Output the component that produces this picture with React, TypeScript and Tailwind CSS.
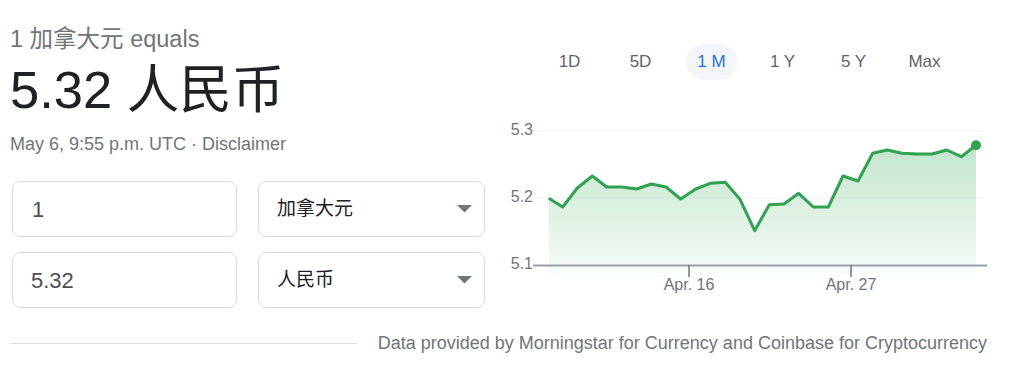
import React from "react";

const tabs = ["1D", "5D", "1 M", "1 Y", "5 Y", "Max"];

// chart points, page coordinates
const pts: [number, number][] = [
  [548.7, 198.3], [562.7, 207], [577.3, 188], [592.3, 176], [606.7, 187],
  [621.7, 187], [636.7, 189], [651.3, 184], [666, 187], [680.7, 199],
  [695.7, 189], [710.3, 183.3], [725.3, 182.3], [740, 199.3], [754.7, 230.7],
  [769.3, 204.7], [784, 204], [798.7, 193.3], [813.3, 207], [828.3, 207],
  [843, 176], [858, 181], [872.7, 153.3], [887.3, 150], [902, 153.3],
  [917, 154], [932, 154], [946.7, 150], [961.3, 156.7], [976, 145.3],
];

const OX = 500;
const OY = 100;

const Chart: React.FC = () => {
  const p = pts.map(([x, y]) => [x - OX, y - OY]);
  const line = p.map(([x, y], i) => `${i ? "L" : "M"}${x.toFixed(1)},${y.toFixed(1)}`).join(" ");
  const first = p[0];
  const last = p[p.length - 1];
  const area = `${line} L${last[0]},173 L${first[0]},173 Z`;
  return (
    <svg width="517" height="210" className="block">
      <defs>
        <linearGradient id="fillG" x1="0" y1="0" x2="0" y2="1">
          <stop offset="0" stopColor="#34a853" stopOpacity="0.3" />
          <stop offset="1" stopColor="#34a853" stopOpacity="0.04" />
        </linearGradient>
      </defs>
      <line x1="33" y1="31" x2="483" y2="31" stroke="#f1f3f4" strokeWidth="1" />
      <line x1="33" y1="98" x2="483" y2="98" stroke="#f1f3f4" strokeWidth="1" />
      <path d={area} fill="url(#fillG)" />
      <line x1="33" y1="165.5" x2="487" y2="165.5" stroke="#9aa0a6" strokeWidth="2" />
      <line x1="189" y1="165" x2="189" y2="177" stroke="#70757a" strokeWidth="1.5" />
      <line x1="351" y1="165" x2="351" y2="177" stroke="#70757a" strokeWidth="1.5" />
      <path d={line} fill="none" stroke="#2fa34f" strokeWidth="3" strokeLinejoin="round" />
      <circle cx={last[0]} cy={last[1]} r="5" fill="#2fa34f" />
      <g fill="#70757a" fontSize="16" fontFamily="'Liberation Sans', sans-serif">
        <text x="33" y="31" textAnchor="end" dominantBaseline="middle">5.3</text>
        <text x="33" y="98" textAnchor="end" dominantBaseline="middle">5.2</text>
        <text x="33" y="165" textAnchor="end" dominantBaseline="middle">5.1</text>
        <text x="189" y="186" textAnchor="middle" dominantBaseline="middle">Apr. 16</text>
        <text x="351" y="186" textAnchor="middle" dominantBaseline="middle">Apr. 27</text>
      </g>
    </svg>
  );
};

const Triangle: React.FC = () => (
  <svg width="15" height="8" viewBox="0 0 15 8" className="block">
    <path d="M0 0 L15 0 L7.5 7.5 Z" fill="#70757a" />
  </svg>
);

const App: React.FC = () => {
  return (
    <div className="w-[1017px] h-[368px] bg-white overflow-hidden font-['Liberation_Sans','Noto_Sans_CJK_SC',sans-serif]">
      <div className="flex">
        {/* left: result and converter */}
        <div className="w-[485px] pl-[10px] flex flex-col">
          <div className="h-[28px] mt-[26px] flex items-center text-[23.5px] text-[#70757a]">
            1 加拿大元 equals
          </div>
          <div className="h-[56px] mt-[8px] flex items-center text-[52.5px] text-[#202124]">
            5.32 人民币
          </div>
          <div className="h-[24px] mt-[14px] flex items-center text-[18px] text-[#70757a]">
            May 6, 9:55 p.m. UTC · Disclaimer
          </div>
          <div className="mt-[25px] ml-[2px] grid grid-cols-[225px_227px] gap-x-[21px] gap-y-[15px]">
            <div className="h-[56px] rounded-lg border border-[#dadce0] flex items-center pl-[19px] text-[22px] text-[#4d5156]">
              1
            </div>
            <div className="h-[56px] rounded-lg border border-[#dadce0] flex items-center justify-between pl-[18px] pr-[12px] text-[19px] text-[#202124]">
              <span>加拿大元</span>
              <Triangle />
            </div>
            <div className="h-[56px] rounded-lg border border-[#dadce0] flex items-center pl-[18px] text-[22px] text-[#4d5156]">
              5.32
            </div>
            <div className="h-[56px] rounded-lg border border-[#dadce0] flex items-center justify-between pl-[18px] pr-[12px] text-[19px] text-[#202124]">
              <span>人民币</span>
              <Triangle />
            </div>
          </div>
        </div>

        {/* right: period tabs and chart */}
        <div className="flex-1 flex flex-col">
          <div className="mt-[44px] ml-[49px] h-[36px] flex">
            {tabs.map((t) => (
              <div key={t} className="w-[71px] flex items-center justify-center">
                {t === "1 M" ? (
                  <div className="w-[51px] h-[36px] rounded-full bg-[#f3f5f8] flex items-center justify-center text-[17px] text-[#1a73e8]">
                    {t}
                  </div>
                ) : (
                  <span className="text-[17px] text-[#5f6368]">{t}</span>
                )}
              </div>
            ))}
          </div>
          <div className="mt-[20px] ml-[15px]">
            <Chart />
          </div>
        </div>
      </div>

      {/* footer */}
      <div className="flex items-center justify-between pl-[10px] pr-[30px] mt-[21px] h-[24px]">
        <div className="w-[347px] h-px bg-[#dadce0]" />
        <span className="text-[18px] text-[#70757a]">
          Data provided by Morningstar for Currency and Coinbase for Cryptocurrency
        </span>
      </div>
    </div>
  );
};

export default App;
